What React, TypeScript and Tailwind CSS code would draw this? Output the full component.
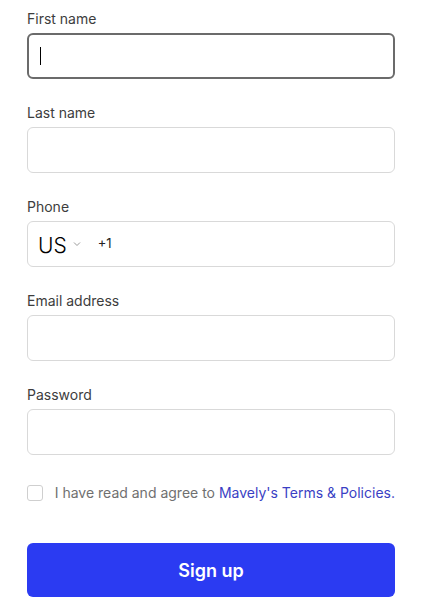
import React from "react";

function Label({ children }: { children: React.ReactNode }) {
  return <div className="text-[14px] leading-4 text-[#3d3d3d] mb-[6px]">{children}</div>;
}

function Box({ children, focused }: { children?: React.ReactNode; focused?: boolean }) {
  return (
    <div
      className={
        focused
          ? "h-[46px] rounded-[6px] border-2 border-[#6b6b6b] bg-white flex items-center px-[11px]"
          : "h-[46px] rounded-[6px] border border-[#d9d9d9] bg-white flex items-center px-[12px]"
      }
    >
      {children}
    </div>
  );
}

export default function App() {
  return (
    <div className="w-[423px] h-[612px] bg-white px-[27px] pt-[11px]" style={{ fontFamily: "Inter, 'Noto Sans', sans-serif" }}>
      <div className="w-[368px] flex flex-col">
        <div>
          <Label>First name</Label>
          <Box focused>
            <div className="w-px h-[18px] bg-black" />
          </Box>
        </div>
        <div className="mt-[26px]">
          <Label>Last name</Label>
          <Box />
        </div>
        <div className="mt-[26px]">
          <Label>Phone</Label>
          <Box>
            <span className="text-[21px] font-light text-black leading-none -ml-[2px] mt-[3px]">US</span>
            <svg className="ml-[6px]" width="8" height="6" viewBox="0 0 8 6" fill="none">
              <path d="M1 1.5 L4 4.5 L7 1.5" stroke="#9a9a9a" strokeWidth="1" />
            </svg>
            <span className="ml-[17px] text-[13px] text-[#222]">+1</span>
          </Box>
        </div>
        <div className="mt-[26px]">
          <Label>Email address</Label>
          <Box />
        </div>
        <div className="mt-[26px]">
          <Label>Password</Label>
          <Box />
        </div>
        <div className="mt-[27px] flex items-center">
          <div className="w-[16px] h-[16px] rounded-[3px] border border-[#cfcfcf] bg-white" />
          <span className="ml-[12px] text-[14px] text-[#707070] whitespace-nowrap">
            I have read and agree to <span className="text-[#3a3fc4]">Mavely's Terms &amp; Policies.</span>
          </span>
        </div>
        <button className="mt-[40px] h-[54px] w-full rounded-[6px] bg-[#2b3bf2] text-white text-[18px] font-semibold">
          Sign up
        </button>
      </div>
    </div>
  );
}
